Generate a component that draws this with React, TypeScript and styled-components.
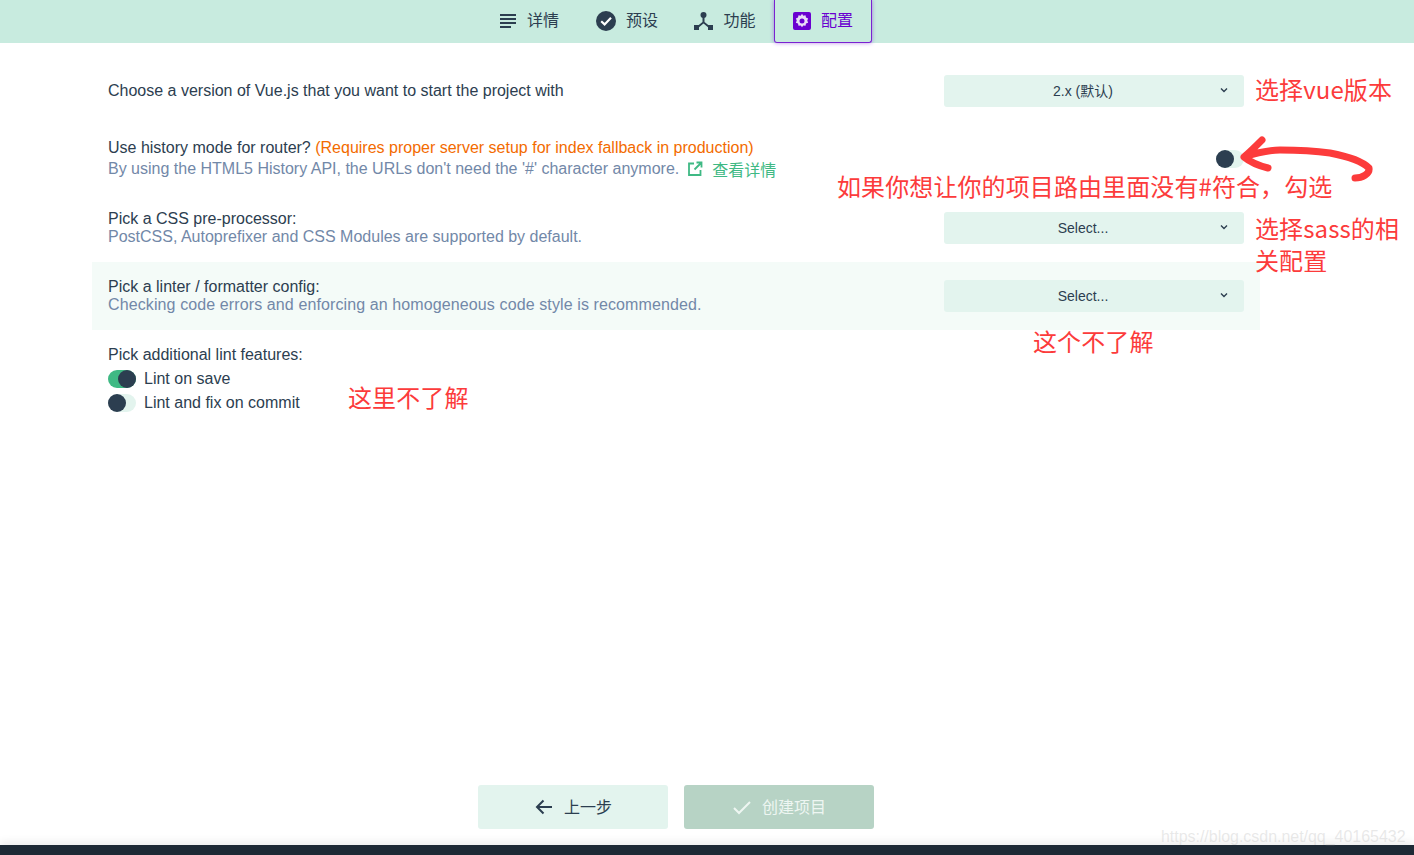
import React from "react";
import styled, { createGlobalStyle } from "styled-components";

const Global = createGlobalStyle`
  html, body { margin: 0; padding: 0; background: #fff; }
  body { font-family: "Liberation Sans", "Noto Sans CJK SC", sans-serif; color: #2c3e50; }
`;
const Page = styled.div`
  position: relative; width: 1414px; height: 855px; overflow: hidden;
  display: flex; flex-direction: column; background: #fff;
`;
const TopBar = styled.nav`
  height: 43px; flex: none; background: #c8ebdf; display: flex; padding-left: 480px; box-sizing: border-box;
`;
const Tab = styled.div<{ $active?: boolean }>`
  width: 98px; height: ${p => (p.$active ? 43 : 42)}px; box-sizing: border-box;
  display: flex; align-items: center; justify-content: center; gap: 10px;
  color: ${p => (p.$active ? "#6a00d0" : "#2c3e50")};
  ${p => p.$active ? `border: 1px solid #7a22d0; border-top: none; border-radius: 0 0 3px 3px; box-shadow: 0 0 4px rgba(106,0,208,.45);` : ""}
`;
const TabLabel = styled.span`
  font-size: 16px; line-height: 20px; padding-bottom: 4px;
  font-family: "Noto Sans CJK SC", sans-serif;
`;
const Main = styled.main`flex: 1; padding: 16px 154px 0 92px;`;
const Row = styled.section<{ $h: number; $hl?: boolean }>`
  height: ${p => p.$h}px; box-sizing: border-box; padding: 0 16px;
  display: flex; align-items: center; justify-content: space-between;
  background: ${p => (p.$hl ? "#f4fbf8" : "transparent")};
`;
const Info = styled.div`display: flex; flex-direction: column; font-size: 16px; line-height: 18px;`;
const Title = styled.div`color: #2c3e50;`;
const Warn = styled.span`color: #f36b00;`;
const Desc = styled.div<{ $gap?: number; $track?: number }>`
  color: #7288a8; margin-top: ${p => p.$gap ?? 0}px; display: flex; align-items: center; height: 18px;
  letter-spacing: ${p => p.$track ?? 0}px;
`;
const DocLink = styled.span`
  color: #3fb984; display: inline-flex; align-items: center; gap: 9px; margin-left: 8px;
  font-family: "Noto Sans CJK SC", sans-serif; font-size: 16px; line-height: 18px;
`;
const Select = styled.div`
  position: relative; width: 300px; height: 32px; box-sizing: border-box; padding-right: 22px;
  border-radius: 3px; background: #e3f4ee;
  display: flex; align-items: center; justify-content: center; font-size: 14px; line-height: 30px; color: #2c3e50;
`;
const SelectText = styled.span``;
const Chevron = styled.svg`position: absolute; right: 14px; top: 9px;`;
const Toggle = styled.div<{ $on?: boolean }>`
  position: relative; width: 28px; height: 18px; border-radius: 9px; flex: none;
  background: ${p => (p.$on ? "#3fb984" : "#e3f4ee")};
  &::after {
    content: ""; position: absolute; top: 0; left: ${p => (p.$on ? 10 : 0)}px;
    width: 18px; height: 18px; border-radius: 50%; background: #2c3e50;
  }
`;
const Lint = styled.div`padding: 17px 16px 0; display: flex; flex-direction: column;`;
const LintTitle = styled.div`font-size: 16px; line-height: 16px; margin-bottom: 4px;`;
const LintOption = styled.div`display: flex; align-items: center; gap: 8px; height: 24px; font-size: 16px;`;
const Footer = styled.footer`
  flex: none; height: 60px; display: flex; gap: 16px; padding-left: 478px;
`;
const Btn = styled.div<{ $primary?: boolean }>`
  width: 190px; height: 44px; border-radius: 3px; display: flex; align-items: center; justify-content: center; gap: 10px;
  background: ${p => (p.$primary ? "#b7d3c5" : "#e3f4ee")};
  color: ${p => (p.$primary ? "#eef6f2" : "#2c3e50")};
`;
const BtnLabel = styled.span`
  font-size: 16px; line-height: 20px; padding-bottom: 3px; font-family: "Noto Sans CJK SC", sans-serif;
`;
const BottomBar = styled.div`flex: none; height: 10px; background: #1d2935; box-shadow: 0 -3px 8px rgba(0,0,0,.08);`;
const Note = styled.div<{ $x: number; $y: number; $w?: number }>`
  position: absolute; left: ${p => p.$x}px; top: ${p => p.$y}px; width: ${p => (p.$w ? p.$w + "px" : "auto")};
  color: #fc3b3b; font-size: 24px; line-height: 32px; letter-spacing: .1px; white-space: ${p => (p.$w ? "normal" : "nowrap")};
  font-family: "Noto Sans CJK SC", sans-serif;
`;
const Arrow = styled.svg`position: absolute; left: 1236px; top: 132px;`;
const Mark = styled.div`
  position: absolute; left: 1161px; top: 827px; font-size: 16px; line-height: 20px; letter-spacing: -.03px; color: rgba(190,190,190,.35);
`;

const Down = () => (
  <Chevron width="12" height="12" viewBox="0 0 12 12" fill="none" stroke="#2c3e50" strokeWidth="1.4"><path d="M3 4.5 6 7.5 9 4.5" /></Chevron>
);

export default function App() {
  return (
    <Page>
      <Global />
      <TopBar>
        <Tab>
          <svg width="18" height="14" viewBox="0 0 18 14" fill="#2c3e50"><path d="M1 0h16v2H1zM1 4h16v2H1zM1 8h16v2H1zM1 12h11v2H1z" /></svg>
          <TabLabel>详情</TabLabel>
        </Tab>
        <Tab>
          <svg width="20" height="20" viewBox="0 0 20 20"><circle cx="10" cy="10" r="10" fill="#2c3e50" /><path d="M5.2 10.2 8.6 13.4 15 6.8" fill="none" stroke="#fff" strokeWidth="2.2" /></svg>
          <TabLabel>预设</TabLabel>
        </Tab>
        <Tab>
          <svg width="19" height="20" viewBox="0 0 19 20" fill="#2c3e50"><circle cx="9.5" cy="4" r="3" /><path d="M8.5 6h2v5l5 4-1.2 1.5-4.8-3.9-4.8 3.9L3.5 15l5-4z" /><rect x="0" y="14" width="5" height="5" /><rect x="14" y="14" width="5" height="5" /></svg>
          <TabLabel>功能</TabLabel>
        </Tab>
        <Tab $active>
          <svg width="18" height="18" viewBox="0 0 18 18"><rect width="18" height="18" rx="2" fill="#6a00d0" /><g transform="translate(9 9) scale(1.25) translate(-9 -9)"><path fill="#e8dcf6" fillRule="evenodd" d="M9 3.2l1 1.5 1.8-.3.4 1.8 1.7.7-.7 1.7.7 1.7-1.7.7-.4 1.8-1.8-.3-1 1.5-1-1.5-1.8.3-.4-1.8-1.7-.7.7-1.7-.7-1.7 1.7-.7.4-1.8 1.8.3zM9 7a2 2 0 1 0 0 4 2 2 0 0 0 0-4z" /></g></svg>
          <TabLabel>配置</TabLabel>
        </Tab>
      </TopBar>
      <Main>
        <Row $h={64}>
          <Info><Title>Choose a version of Vue.js that you want to start the project with</Title></Info>
          <Select><SelectText>2.x (默认)</SelectText><Down /></Select>
        </Row>
        <Row $h={71}>
          <Info>
            <Title>Use history mode for router? <Warn>(Requires proper server setup for index fallback in production)</Warn></Title>
            <Desc $gap={3}>
              By using the HTML5 History API, the URLs don't need the '#' character anymore.
              <DocLink>
                <svg width="16" height="16" viewBox="0 0 16 16" fill="none" stroke="#3fb984" strokeWidth="1.8"><path d="M7 2.5H2v11.5h11.5V9M9.5 1.5h5v5M14.5 1.5 7.5 8.5" /></svg>
                查看详情
              </DocLink>
            </Desc>
          </Info>
          <Toggle />
        </Row>
        <Row $h={68}>
          <Info>
            <Title>Pick a CSS pre-processor:</Title>
            <Desc>PostCSS, Autoprefixer and CSS Modules are supported by default.</Desc>
          </Info>
          <Select><SelectText>Select...</SelectText><Down /></Select>
        </Row>
        <Row $h={68} $hl>
          <Info>
            <Title>Pick a linter / formatter config:</Title>
            <Desc $track={0.11}>Checking code errors and enforcing an homogeneous code style is recommended.</Desc>
          </Info>
          <Select><SelectText>Select...</SelectText><Down /></Select>
        </Row>
        <Lint>
          <LintTitle>Pick additional lint features:</LintTitle>
          <LintOption><Toggle $on /> Lint on save</LintOption>
          <LintOption><Toggle /> Lint and fix on commit</LintOption>
        </Lint>
      </Main>
      <Footer>
        <Btn>
          <svg width="20" height="20" viewBox="0 0 20 20" fill="none" stroke="#2c3e50" strokeWidth="2"><path d="M18 10H3M9.5 3.5 3 10l6.5 6.5" /></svg>
          <BtnLabel>上一步</BtnLabel>
        </Btn>
        <Btn $primary>
          <svg width="20" height="20" viewBox="0 0 20 20" fill="none" stroke="#eef6f2" strokeWidth="2"><path d="M2 11l5 5L18 5" /></svg>
          <BtnLabel>创建项目</BtnLabel>
        </Btn>
      </Footer>
      <BottomBar />
      <Arrow width="140" height="56" viewBox="0 0 140 56" fill="none" stroke="#fc3b3b" strokeWidth="7" strokeLinecap="round" strokeLinejoin="round">
        <path d="M26 8 C20 14 14 20 8 25 C14 30 24 34 32 36 M8 25 C20 21 32 18 44 18 C60 18 80 19 94 21 C110 24 125 28 133 36 C134 42 126 46 119 46" />
      </Arrow>
      <Note $x={1255} $y={73}>选择vue版本</Note>
      <Note $x={837} $y={170}>如果你想让你的项目路由里面没有#符合，勾选</Note>
      <Note $x={1255} $y={212} $w={150}>选择sass的相关配置</Note>
      <Note $x={1033} $y={325}>这个不了解</Note>
      <Note $x={348} $y={381}>这里不了解</Note>
      <Mark>https://blog.csdn.net/qq_40165432</Mark>
    </Page>
  );
}
